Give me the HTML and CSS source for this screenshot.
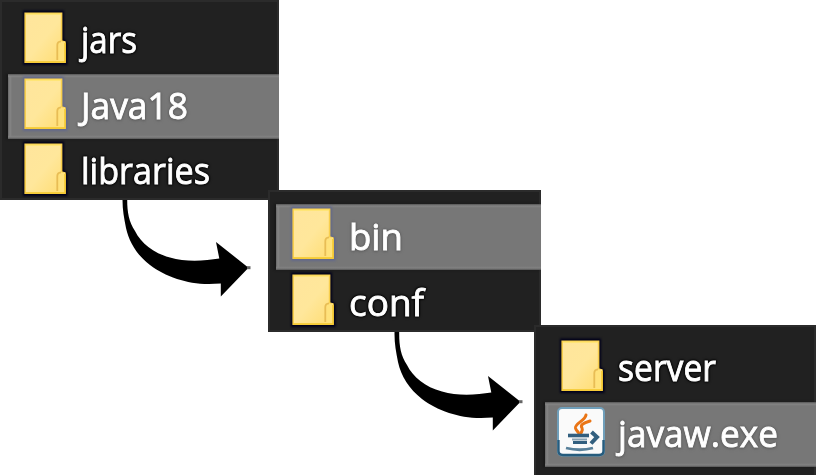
FILE: index.html
```html
<!DOCTYPE html>
<html lang="en">
<head>
<meta charset="utf-8">
<title>Java folder path</title>
<link rel="stylesheet" href="styles.css">
</head>
<body>
<svg class="defs" aria-hidden="true">
  <defs>
    <linearGradient id="paper" x1="0" y1="0" x2="1" y2="1"><stop offset="0" stop-color="#ffe59c"/><stop offset=".5" stop-color="#ffe79b"/><stop offset="1" stop-color="#ffdc70"/></linearGradient>
    <filter id="soft" x="-10%" y="-10%" width="120%" height="120%"><feGaussianBlur stdDeviation=".6"/></filter>
    <symbol id="folder" viewBox="0 0 48 56" overflow="visible">
      <path class="halo" d="M-1-1.5H40V27L43.5 30V53H-1Z"/>
      <g filter="url(#soft)">
        <path d="M1.2 1.2H37.6V29L41 30V50.3H1.2Z" fill="url(#paper)" stroke="#f8cf4d" stroke-width="1.6"/>
        <path d="M2 2.2H37" stroke="#ffe46b" stroke-width="1.3"/>
        <path d="M33.5 49V32L36 29.5H41V49Z" fill="#ffe27c"/>
        <path d="M33.3 48V33Q33.3 29.5 37 29.3" fill="none" stroke="#e8bd55" stroke-width="1.8"/>
        <path d="M41 31V50H1" fill="none" stroke="#f5ca32" stroke-width="1.6"/>
      </g>
    </symbol>
    <symbol id="arrow" viewBox="0 0 130 100" overflow="visible">
      <path filter="url(#soft)" d="M.5-4H5.2V0C5.2 12 7 22 13 31C19 43 31 53 48 57.5C63 62 82 61 97.3 58.5L94 42L126.5 67.7L98.8 96.5V83.5C80 85 68 83 55 79C44 75 36 71 28 65C15 55 7 42 4 28C2 18 .5 10 .5 0Z"/>
      <path d="M125 67.7H128.5" stroke="#666" stroke-width="3"/>
    </symbol>
  </defs>
</svg>
<main class="stairs">
  <section class="panel first">
    <div class="row"><svg class="icon"><use href="#folder"/></svg><svg class="label"><text y="45" textLength="56" lengthAdjust="spacingAndGlyphs">jars</text></svg></div>
    <div class="row selected"><svg class="icon"><use href="#folder"/></svg><svg class="label"><text y="45" textLength="107" lengthAdjust="spacingAndGlyphs">Java18</text></svg></div>
    <div class="row"><svg class="icon"><use href="#folder"/></svg><svg class="label"><text y="45" textLength="129" lengthAdjust="spacingAndGlyphs">libraries</text></svg></div>
    <svg class="arrow"><use href="#arrow"/></svg>
  </section>
  <section class="panel second">
    <div class="row selected"><svg class="icon"><use href="#folder"/></svg><svg class="label"><text y="46" textLength="54" lengthAdjust="spacingAndGlyphs">bin</text></svg></div>
    <div class="row"><svg class="icon"><use href="#folder"/></svg><svg class="label"><text y="46" textLength="75" lengthAdjust="spacingAndGlyphs">conf</text></svg></div>
    <svg class="arrow"><use href="#arrow"/></svg>
  </section>
  <section class="panel third">
    <div class="row"><svg class="icon"><use href="#folder"/></svg><svg class="label"><text x="1" y="45" textLength="98" lengthAdjust="spacingAndGlyphs">server</text></svg></div>
    <div class="row selected">
      <svg class="icon java" viewBox="0 0 48 50">
        <g filter="url(#soft)">
          <rect x="1" y="1" width="46" height="47.5" rx="4" fill="#fafafa" stroke="#6f9fba" stroke-width="2"/>
          <path d="M1.5 33V44Q1.5 48 6 48H42Q46.5 48 46.5 44V33" fill="none" stroke="#285b7d" stroke-width="2.4"/>
          <g fill="none" stroke="#ea7413" stroke-width="3" stroke-linecap="round">
            <path d="M29 8C28 14 18 16 18.5 21C19 24 21 24 21.500 26"/>
            <path d="M33 14C26 16 23 18 25 21C26 23 25 24 24 26"/>
          </g>
          <g fill="none" stroke="#315f7f" stroke-width="3">
            <path d="M11 28.500H32" stroke-width="3.600"/>
            <path d="M15 32.500H30" stroke="#8aa4b5" stroke-width="2"/>
            <path d="M16 35.500H30"/>
            <path d="M34.500 25L40 30L34 36.500" stroke-width="4"/>
            <path d="M9 41Q23 44.500 36 41" stroke="#58809a" stroke-width="2.800"/>
          </g>
        </g>
      </svg>
      <svg class="label"><text x="1" y="45" textLength="160" lengthAdjust="spacingAndGlyphs">javaw.exe</text></svg>
    </div>
  </section>
</main>
</body>
</html>
```
FILE: styles.css
```css
body { margin: 0; background: #fff; overflow: hidden; }
.defs { position: absolute; width: 0; height: 0; }
.stairs { width: 816px; height: 475px; overflow: hidden; }
.panel {
  position: relative;
  box-sizing: border-box;
  background: #212121;
  border: 2px solid #2b2b2b;
}
.first { width: 279px; height: 200px; padding: 6px 0 0 6px; }
.second { width: 273px; height: 142px; margin: -10px 0 0 268px; padding: 12px 0 0 6px; }
.third { width: 282px; height: 150px; margin: -7px 0 0 534px; padding: 9px 0 0 9px; border-bottom: 0; }
.row {
  box-sizing: border-box;
  display: flex;
  height: 65.5px;
  padding: 4px 0 0 16px;
  margin-right: -2px;
}
.second .row { height: 66px; }
.selected {
  background:
    linear-gradient(#555 0, #848484 2px, transparent 4px calc(100% - 4px), #828282 calc(100% - 2px), #555 100%),
    linear-gradient(90deg, #666 0, #868686 2px, #777 4px);
  box-shadow: -2px 0 2px #191919;
}
.icon { flex: none; width: 48px; height: 56px; overflow: visible; }
.halo { fill: var(--halo, #00001b); filter: blur(1px); }
.selected .icon { --halo: #63698b; }
.java { width: 48px; height: 50px; margin: 1px 4px 0 -4px; }
.label {
  flex: none;
  width: 170px;
  height: 62px;
  margin: -4px 0 0 9px;
  overflow: visible;
  font: 500 37px "Open Sans", "Noto Sans", sans-serif;
  fill: #fff;
  stroke: #fff;
  stroke-width: .9px;
  filter: blur(.4px) drop-shadow(0 0 1px #000) drop-shadow(0 0 1px #000);
}
.selected .label { filter: blur(.4px) drop-shadow(0 0 1px #555) drop-shadow(0 1px 1px #666); }
.third .row { padding-left: 16px; }
.third .label { margin-left: 8px; }
.arrow { position: absolute; z-index: -1; left: 120px; top: 198px; width: 130px; height: 100px; overflow: visible; }
.second .arrow { left: 124px; top: 142px; }
```
